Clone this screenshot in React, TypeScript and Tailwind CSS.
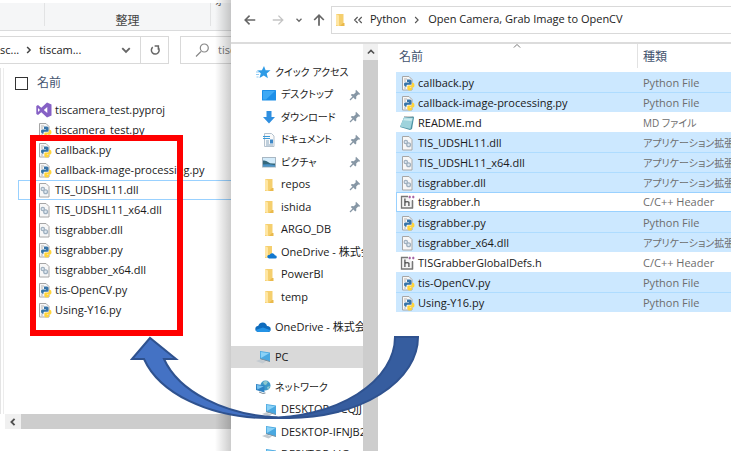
import { type ReactNode } from 'react'

// --- Types ---

type FileKind = 'vs' | 'py' | 'dll' | 'md' | 'h'

interface FileRow {
  name: string
  kind: FileKind
  selected?: boolean
  focused?: boolean
}

interface NavItem {
  label: string
  icon: ReactNode
  child?: boolean
  pinned?: boolean
  active?: boolean
}

// --- File icons ---

function PageShape() {
  return <path d="M3.500 1.500h6.500l3 3v10.500h-9.500z" fill="#f7f7f7" stroke="#a6a6a6" />
}

function FileIcon({ kind }: { kind: FileKind }) {
  return (
    <svg viewBox="0 0 16 16" className="w-4 h-4 shrink-0" aria-hidden="true">
      {kind === 'vs' && (
        <path
          fillRule="evenodd"
          d="M11 .5l4.500 2v11L11 15.500 5.300 10.200 2 12.900.3 12V4L2 3.100l3.300 2.700zM11.300 5L7.800 8l3.500 3zM2 6v4L4 8z"
          fill="#8661c5"
        />
      )}
      {kind === 'py' && (
        <>
          <PageShape />
          <path d="M5 4h3M5 6h2M5 13h2" stroke="#b5b5b5" />
          <path d="M8 4.500h3q1.500 0 1.500 1.500v2.500q0 1.200-1.300 1.200H8.500q-1 0-1 1v1H6.400Q5 11.700 5 9.300T6.600 7.500H10V7H8z" fill="#3674a8" />
          <path d="M13 7.800h1q1.500.2 1.500 2.400T14 12.400h-3.200v.6H13v1.200q-.4 1.300-2.300 1.300T8.300 14v-2.300q0-1.200 1.400-1.200h2.200q1.100 0 1.100-1.200z" fill="#ffd43b" />
        </>
      )}
      {kind === 'dll' && (
        <>
          <PageShape />
          <circle cx="6.800" cy="7" r="1.700" fill="#dfe9f2" stroke="#9fb0bf" strokeWidth="1.200" />
          <circle cx="9.600" cy="9.800" r="1.900" fill="#dfe9f2" stroke="#9fb0bf" strokeWidth="1.300" />
        </>
      )}
      {kind === 'md' && (
        <>
          <path d="M5 2.500l9.500-1 .5 1-2 11.500-2 1-10-3z" fill="#4d94a5" />
          <path d="M5 2.500l9 .2-2.600 11.200L1 11.400z" fill="#9ed3dc" />
          <path d="M5.200 3.400l8 .1-.6 2.500-8.200-.8z" fill="#cbecef" />
          <path d="M5.500 1.500l8.500.6" stroke="#777" strokeDasharray="1 1" />
        </>
      )}
      {kind === 'h' && (
        <>
          <path d="M9 2.500H2.500v11.500h11V7" fill="#f4f4f4" stroke="#777" strokeWidth="1.300" />
          <path d="M13.500 6v8" stroke="#777" strokeWidth="1.300" />
          <path d="M5.900 4.500v7.500M5.900 8.300q2.500-1.500 4 0v3.700" fill="none" stroke="#555" strokeWidth="1.300" />
          <path d="M9.500 3h2.500M10.750 1.700v2.600M13 3h2.500M14.250 1.700v2.600" stroke="#9b4f96" />
        </>
      )}
    </svg>
  )
}

// --- Navigation icons ---

function NavSvg({ children }: { children: ReactNode }) {
  return (
    <svg viewBox="0 0 16 16" className="w-4 h-4 shrink-0" aria-hidden="true">
      {children}
    </svg>
  )
}

const starIcon = (
  <NavSvg>
    <path d="M9 2l1.600 4.200 4.900.1-3.800 3.100 1.200 4.800-4.100-2.600L4.500 14l1.300-4.700L2 6.400l4.900-.2z" fill="#2e9be6" />
    <path d="M1 8h3M1 10.500h3M1.500 13h2" stroke="#8fcbf4" />
  </NavSvg>
)

const desktopIcon = (
  <NavSvg>
    <rect x="1" y="3" width="14" height="10.500" rx=".5" fill="#1d8fe8" />
    <path d="M2 4h12l-9 8.500H2z" fill="#3ea9f5" />
  </NavSvg>
)

const downloadIcon = (
  <NavSvg>
    <path d="M5.500 2h5v6H14l-6 6.500L2 8h3.500z" fill="#2f8fe0" />
  </NavSvg>
)

const documentIcon = (
  <NavSvg>
    <path d="M3.500 1.500h7l2.500 2.500v10.500H3.500z" fill="#fafafa" stroke="#b4c2ce" />
    <path d="M2 4.500h7M2 6.500h7" stroke="#3a9ad9" />
    <path d="M5 9h3M5 11h3M5 13h7" stroke="#85a4bd" />
    <rect x="9" y="7.500" width="3" height="4" fill="#3e88c7" />
  </NavSvg>
)

const pictureIcon = (
  <NavSvg>
    <rect x="1.500" y="3.500" width="13" height="9.500" fill="#d4ecfb" stroke="#a8b7c3" />
    <path d="M2 6.500q3-.5 5 1.500t7 1.500v3H2z" fill="#35687c" />
    <path d="M2 10.500q6-1 12 .8v1.200H2z" fill="#4b93c9" />
  </NavSvg>
)

const folderIcon = (
  <NavSvg>
    <path d="M4 2h7.500v10.500H12V14H4z" fill="#f5cf6e" />
    <path d="M4 2l3 1.500V14L4 13z" fill="#ffe6a3" />
    <path d="M11 11h1.500v3H8z" fill="#eab94b" />
  </NavSvg>
)

const cloudFolderIcon = (
  <NavSvg>
    <path d="M4 2h7v12H4z" fill="#f5cf6e" />
    <path d="M4 2l3 1.500V14L4 13z" fill="#ffe6a3" />
    <path d="M8 14.500q-2-.3-1.700-2.100T8.500 11q1-2.200 3-1.800t2.300 2q2 .3 2 1.800t-1.600 1.500z" fill="#1177cf" />
  </NavSvg>
)

const cloudIcon = (
  <NavSvg>
    <path d="M3.500 13Q.3 12.700.3 10t3-3.200Q4.500 3.500 7.800 3.500T12 7q3.700.2 3.700 3.200T12.500 13z" fill="#0f6cbd" />
    <path d="M3.500 13q-2.300-.3-3-2L8 8.500l7.500 2.700q-.8 1.800-3 1.800z" fill="#2493e6" />
  </NavSvg>
)

const computerIcon = (
  <NavSvg>
    <path d="M5 2l10 1.500v9L5 9.700z" fill="#4aa8e0" />
    <path d="M5.700 2.900l8.500 1.300L6 8.900z" fill="#8bd2f7" />
    <path d="M5 9.700l10 2.800" stroke="#7b8f9d" />
    <path d="M1 12l4-1.500 6 2L7.500 14.500z" fill="#c3cad0" />
  </NavSvg>
)

const networkIcon = (
  <NavSvg>
    <circle cx="10.500" cy="6.500" r="5" fill="#3d98c9" />
    <path d="M8 3q3-2 5 0l-2 3-2-.5zM12 8l3-1-2 4z" fill="#8fc9cf" />
    <path d="M1 5l8.500 1.500v7L1 11z" fill="#2d82c4" />
    <path d="M1.800 6l7 1.200-6.500 3.300z" fill="#75c1ef" />
    <path d="M4 13l4 1.500 2.500-.5" stroke="#7e8f9c" fill="none" />
  </NavSvg>
)

function PinIcon() {
  return (
    <svg viewBox="0 0 12 12" className="w-3 h-3 shrink-0" aria-hidden="true">
      <path d="M7 .8l4.200 4.200-1 .8-1-.2-2 2 .1 2-1 .9L1.800 6l1-1 2 .2 2-2-.3-1.300z" fill="#8797a5" />
      <path d="M4 8L1 11" stroke="#8797a5" strokeWidth="1.200" />
    </svg>
  )
}

// --- Small line glyphs ---

function Glyph({ d, className, width = 1.5 }: { d: string; className: string; width?: number }) {
  return (
    <svg viewBox="0 0 16 16" className={className} fill="none" stroke="currentColor" strokeWidth={width} aria-hidden="true">
      <path d={d} />
    </svg>
  )
}

const CHEVRON_RIGHT = 'M5.500 4l4 4-4 4'
const CHEVRON_DOWN = 'M3 5.500l5 5 5-5'
const CHEVRON_UP = 'M3 10.500l5-5 5 5'
const CHEVRON_LEFT = 'M10.500 3l-5 5 5 5'

// --- Data ---

const leftFiles: FileRow[] = [
  { name: 'tiscamera_test.pyproj', kind: 'vs' },
  { name: 'tiscamera_test.py', kind: 'py' },
  { name: 'callback.py', kind: 'py' },
  { name: 'callback-image-processing.py', kind: 'py' },
  { name: 'TIS_UDSHL11.dll', kind: 'dll', focused: true },
  { name: 'TIS_UDSHL11_x64.dll', kind: 'dll' },
  { name: 'tisgrabber.dll', kind: 'dll' },
  { name: 'tisgrabber.py', kind: 'py' },
  { name: 'tisgrabber_x64.dll', kind: 'dll' },
  { name: 'tis-OpenCV.py', kind: 'py' },
  { name: 'Using-Y16.py', kind: 'py' },
]

const rightFiles: FileRow[] = [
  { name: 'callback.py', kind: 'py', selected: true },
  { name: 'callback-image-processing.py', kind: 'py', selected: true },
  { name: 'README.md', kind: 'md' },
  { name: 'TIS_UDSHL11.dll', kind: 'dll', selected: true },
  { name: 'TIS_UDSHL11_x64.dll', kind: 'dll', selected: true },
  { name: 'tisgrabber.dll', kind: 'dll', selected: true },
  { name: 'tisgrabber.h', kind: 'h', focused: true },
  { name: 'tisgrabber.py', kind: 'py', selected: true },
  { name: 'tisgrabber_x64.dll', kind: 'dll', selected: true },
  { name: 'TISGrabberGlobalDefs.h', kind: 'h' },
  { name: 'tis-OpenCV.py', kind: 'py', selected: true },
  { name: 'Using-Y16.py', kind: 'py', selected: true },
]

const TYPE_LABELS: Record<FileKind, string> = {
  vs: 'Python Project',
  py: 'Python File',
  dll: 'アプリケーション拡張',
  md: 'MD ファイル',
  h: 'C/C++ Header',
}

const navGroups: NavItem[][] = [
  [
    { label: 'クイック アクセス', icon: starIcon },
    { label: 'デスクトップ', icon: desktopIcon, child: true, pinned: true },
    { label: 'ダウンロード', icon: downloadIcon, child: true, pinned: true },
    { label: 'ドキュメント', icon: documentIcon, child: true, pinned: true },
    { label: 'ピクチャ', icon: pictureIcon, child: true, pinned: true },
    { label: 'repos', icon: folderIcon, child: true, pinned: true },
    { label: 'ishida', icon: folderIcon, child: true, pinned: true },
    { label: 'ARGO_DB', icon: folderIcon, child: true },
    { label: 'OneDrive - 株式会', icon: cloudFolderIcon, child: true },
    { label: 'PowerBI', icon: folderIcon, child: true },
    { label: 'temp', icon: folderIcon, child: true },
  ],
  [{ label: 'OneDrive - 株式会', icon: cloudIcon }],
  [{ label: 'PC', icon: computerIcon, active: true }],
  [
    { label: 'ネットワーク', icon: networkIcon },
    { label: 'DESKTOP-DCQJJ', icon: computerIcon, child: true },
    { label: 'DESKTOP-IFNJB2', icon: computerIcon, child: true },
    { label: 'DESKTOP-LIG', icon: computerIcon, child: true },
  ],
]

const hasKana = (text: string) => /[\u30a0-\u30ff]/.test(text)

// --- Back window ---

function BackWindow() {
  return (
    <section className="relative flex flex-col w-[231px] shrink-0 pt-[3px] overflow-hidden bg-white">
      {/* Ribbon */}
      <div className="flex h-7 shrink-0 bg-[#f5f6f7] border-b border-[#dadbdc]">
        <div className="w-[45px] mb-1 border-r border-[#e2e3e4]" />
        <div className="flex-1 mb-1 pt-2 text-center text-xs leading-5 text-[#444] border-r border-[#e2e3e4]">整理</div>
        <div className="w-5 h-[3px] overflow-hidden flex items-end pl-1 text-[10px] leading-[10px] text-[#444]">フォ</div>
      </div>

      {/* Address bar */}
      <div className="flex h-7 shrink-0 mt-[5px] text-[#222]">
        <div className="flex items-center flex-1 min-w-0 border-y border-[#d9d9d9]">
          <button>sc...</button>
          <Glyph d={CHEVRON_RIGHT} className="w-3 h-3 mx-1 text-[#444]" width={2} />
          <button>tiscam...</button>
          <button aria-label="履歴" className="ml-auto mr-2 text-[#666]">
            <Glyph d={CHEVRON_DOWN} className="w-3 h-3" width={2.5} />
          </button>
        </div>
        <button aria-label="更新" className="flex items-center justify-center w-[29px] border border-[#d9d9d9] text-[#666]">
          <Glyph d="M4 4.500A5.200 5.200 0 1 0 11 4.200M8.500 2.500h-5v5" className="w-3 h-3 -scale-x-100" width={2} />
        </button>
        <label className="flex items-center w-[51px] ml-[11px] pl-[13px] border-y border-l border-[#d9d9d9]">
          <Glyph d="M7 9.500L2 14.500M6.300 6a4 4 0 1 0 8 0a4 4 0 1 0-8 0" className="w-4 h-4 shrink-0 text-[#888]" width={1.2} />
          <input aria-label="検索" placeholder="tiscameraの検索" className="w-full min-w-0 ml-2 placeholder-[#777] outline-none" />
        </label>
      </div>

      {/* File list */}
      <div className="flex flex-col flex-1 mt-1 border-l border-[#e4e4e4] pl-[2px]">
        <div className="flex-1 border-l border-[#ececec]">
          <table className="table-fixed w-full border-separate border-spacing-0 whitespace-nowrap">
            <colgroup>
              <col className="w-[14px]" />
              <col />
            </colgroup>
            <thead>
              <tr>
                <th colSpan={2} className="h-8 p-0 pb-[2px] text-xs font-normal text-left text-[#44546f]">
                  <label className="flex items-center ml-[11px] gap-[9px]">
                    <input type="checkbox" className="appearance-none w-[13px] h-[13px] border border-[#333] bg-white" />
                    名前
                  </label>
                </th>
              </tr>
            </thead>
            <tbody>
              {leftFiles.map((file) => (
                <tr key={file.name}>
                  <td className="p-0" />
                  <td
                    className={`h-5 p-0 pl-[17px] leading-[18px] border-y border-l ${
                      file.focused ? 'border-[#99d1ff]' : 'border-transparent'
                    }`}
                  >
                    <span className="flex items-center gap-[3px]">
                      <FileIcon kind={file.kind} />
                      {file.name}
                    </span>
                  </td>
                </tr>
              ))}
            </tbody>
          </table>
        </div>
      </div>

      {/* Horizontal scrollbar */}
      <div className="flex h-[15px] shrink-0 mb-[22px] ml-[5px] bg-[#cdcdcd]">
        <button aria-label="左へスクロール" className="flex items-center justify-center w-4 bg-[#f0f0f0] text-[#505050]">
          <Glyph d={CHEVRON_LEFT} className="w-[10px] h-[10px]" width={3} />
        </button>
      </div>

      {/* Shadow cast by the front window */}
      <div className="absolute inset-y-0 right-0 w-4 bg-linear-to-r from-transparent to-black/20 pointer-events-none" />
    </section>
  )
}

// --- Front window ---

function NavPane() {
  return (
    <nav className="flex flex-col gap-2 w-[132px] shrink-0 pt-[17px] overflow-hidden whitespace-nowrap">
      {navGroups.map((group, groupIdx) => (
        <ul key={groupIdx}>
          {group.map((item) => (
            <li key={item.label} className="h-[23px] odd:h-[22px]">
              <a
                href="#"
                className={`flex items-center h-full gap-1 ${item.child ? 'pl-[30px]' : 'pl-6'} ${
                  item.active ? 'bg-[#d9d9d9]' : ''
                }`}
              >
                {item.icon}
                <span className={hasKana(item.label) ? 'text-[10px]' : ''}>{item.label}</span>
                {item.pinned && (
                  <span className="ml-auto mr-[2px]">
                    <PinIcon />
                  </span>
                )}
              </a>
            </li>
          ))}
        </ul>
      ))}
    </nav>
  )
}

function FileTable() {
  return (
    <table className="table-fixed w-full border-separate border-spacing-0 whitespace-nowrap">
      <thead>
        <tr className="text-left text-xs text-[#44546f]">
          <th className="relative w-[242px] h-7 p-0 pl-[3px] pb-[2px] font-normal">
            名前
            <Glyph
              d={CHEVRON_UP}
              className="absolute top-[-3px] left-1/2 -translate-x-1/2 w-[10px] h-[10px] text-[#777]"
              width={1.6}
            />
            <span className="absolute top-0 right-0 w-px h-6 bg-[#e2e2e2]" />
          </th>
          <th className="h-7 p-0 pl-[5px] pb-[2px] font-normal">種類</th>
        </tr>
      </thead>
      <tbody>
        {rightFiles.map((file, idx) => {
          const joined = file.selected && rightFiles[idx - 1]?.selected
          const edge = file.focused ? 'border-y border-[#99d1ff]' : joined ? 'border-t border-[#aedcff]' : 'border-t border-transparent'
          return (
            <tr key={file.name} className={file.selected ? 'bg-[#cce8ff]' : ''}>
              <td className={`h-5 p-0 leading-[18px] ${edge} ${file.focused ? 'border-l pl-[2px]' : 'pl-[3px]'}`}>
                <span className="flex items-center gap-[3px]">
                  <FileIcon kind={file.kind} />
                  {file.name}
                </span>
              </td>
              <td className={`h-5 p-0 pl-[5px] leading-[18px] overflow-hidden text-[#6d6d6d] ${edge}`}>
                <span className={hasKana(TYPE_LABELS[file.kind]) ? 'block text-[10px] leading-[18px]' : 'block'}>
                  {TYPE_LABELS[file.kind]}
                </span>
              </td>
            </tr>
          )
        })}
      </tbody>
    </table>
  )
}

function FrontWindow() {
  return (
    <section className="flex flex-col flex-1 min-w-0 overflow-hidden bg-white">
      {/* Navigation bar */}
      <div className="flex items-center h-11 pt-[6px] pb-[9px] shrink-0 border-b-2 border-[#dcdcdc] text-[#666]">
        <button aria-label="戻る" className="ml-3">
          <Glyph d="M14 8H2.500M7.500 3l-5 5 5 5" className="w-[14px] h-[14px]" width={1.8} />
        </button>
        <button aria-label="進む" className="ml-[14px] text-[#c4c4c4]">
          <Glyph d="M2 8h11.500M8.500 3l5 5-5 5" className="w-[14px] h-[14px]" width={1.5} />
        </button>
        <button aria-label="最近表示した場所" className="ml-[10px]">
          <Glyph d={CHEVRON_DOWN} className="w-2 h-2" width={2.5} />
        </button>
        <button aria-label="上へ" className="ml-[9px]">
          <Glyph d="M8 14.500V2.500M2.500 8L8 2.500 13.500 8" className="w-[14px] h-[14px]" width={2} />
        </button>
        <div className="flex items-center flex-1 h-7 ml-[5px] border-y border-l border-[#d9d9d9] text-[#222]">
          {folderIcon}
          <Glyph d="M7.500 4l-4 4 4 4M13 4L9 8l4 4" className="w-3 h-3 ml-1 text-[#555]" />
          <button className="ml-[6px]">Python</button>
          <Glyph d={CHEVRON_RIGHT} className="w-3 h-3 mx-[5px] text-[#555]" />
          <button>Open Camera, Grab Image to OpenCV</button>
        </div>
      </div>

      <div className="flex flex-1 min-h-0">
        <NavPane />
        <div className="flex flex-col w-[15px] shrink-0 bg-[#cdcdcd]">
          <button aria-label="上へスクロール" className="flex items-center justify-center h-4 bg-[#f0f0f0] text-[#505050]">
            <Glyph d={CHEVRON_UP} className="w-[10px] h-[10px]" width={2.5} />
          </button>
        </div>
        <main className="flex-1 min-w-0 pl-[18px]">
          <FileTable />
        </main>
      </div>
    </section>
  )
}

// --- Annotations ---

function CopyArrow() {
  return (
    <svg
      viewBox="0 0 290 86"
      className="absolute left-[130px] top-[335px] w-[290px] h-[86px] pointer-events-none"
      stroke="#2f528f"
      strokeWidth="2"
      aria-hidden="true"
    >
      <path d="M136 83A129 81 0 0 0 265 2h23A129 81 0 0 1 159 83z" fill="#365d9f" />
      <path d="M20 3L2 24h12A129 81 0 0 0 136 83q6 0 11.500-.4A129 81 0 0 1 34 24h12z" fill="#4472c4" />
    </svg>
  )
}

export default function App() {
  return (
    <div className="relative flex h-screen overflow-hidden bg-white pb-[2px] pr-[2px] font-['Open_Sans','Noto_Sans_CJK_JP',sans-serif] text-[11px] text-[#1a1a1a] [font-feature-settings:'palt']">
      <BackWindow />
      <FrontWindow />
      <div className="absolute left-[30px] top-[135px] w-[153px] h-[201px] border-6 border-[#ff0000] pointer-events-none" />
      <CopyArrow />
    </div>
  )
}
